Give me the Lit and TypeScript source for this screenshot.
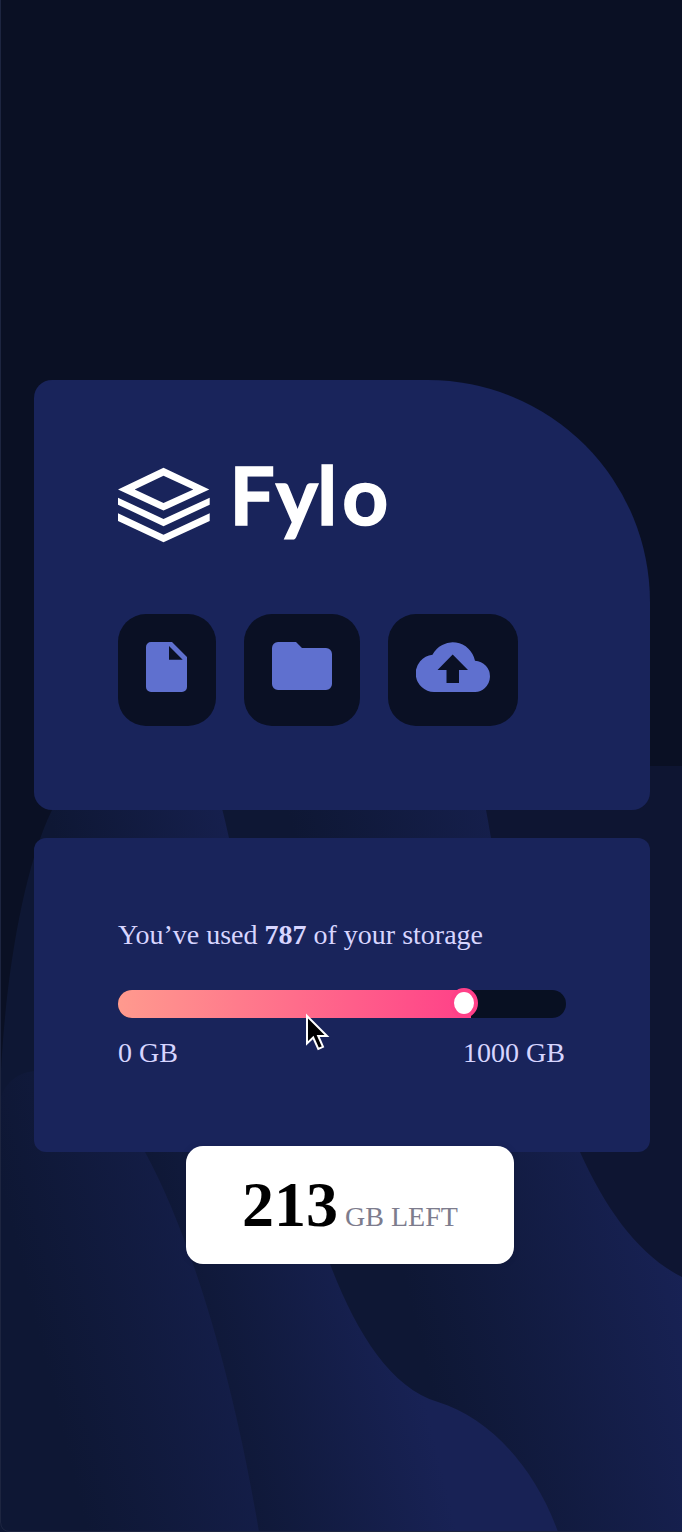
import { LitElement, html, css, svg } from "lit";
import { customElement, property } from "lit/decorators.js";

const fileIcon = html`<svg width="42" height="50" viewBox="0 0 42 50">
  <path fill="#5f70cf" fill-rule="evenodd" d="M5 0H26L41 15V45a5 5 0 0 1-5 5H5a5 5 0 0 1-5-5V5a5 5 0 0 1 5-5ZM23 4V17.700H36.700Z"/>
</svg>`;

const folderIcon = html`<svg width="60" height="48" viewBox="0 0 60 48">
  <path fill="#5f70cf" d="M6 0H24L30 6H54a6 6 0 0 1 6 6V42a6 6 0 0 1-6 6H6a6 6 0 0 1-6-6V6A6 6 0 0 1 6 0Z"/>
</svg>`;

const uploadIcon = html`<svg width="74" height="50" viewBox="0 0 74 50">
  <path fill="#5f70cf" fill-rule="evenodd" d="M18.700 50A18.700 18.700 0 0 1 16.500 12.700A22.700 22.700 0 0 1 59 18.800A15.600 15.600 0 0 1 57.700 50ZM36.700 12.500L21.500 28H30.500V41H43V28H52Z"/>
</svg>`;

@customElement("fylo-logo")
export class FyloLogo extends LitElement {
  static styles = css`
    :host { display: block; height: 80px; }
    svg { display: block; overflow: visible; }
    .word {
      font-family: Lato, sans-serif; font-weight: 700; font-size: 80px;
      stroke: #fff; stroke-width: 1.5px;
    }
  `;
  render() {
    return html`<svg width="272" height="80" viewBox="0 0 272 80" fill="#fff">
      <path fill-rule="evenodd" d="M45.500 3.700L91.300 25.400L45.500 46.600L0 25.400ZM45.500 11.700L16.700 25.500L45.500 39L75.300 25.500Z"/>
      <path d="M0 33.700L45.500 55L91.700 33.700V40.700L45.500 62.200L0 40.700Z"/>
      <path d="M0 49.300L45.500 70.700L91.700 49.300V57L45.500 78.200L0 57Z"/>
      <text class="word" x="111.500 157.800 199.300 224.200" y="61">Fylo</text>
    </svg>`;
  }
}

@customElement("storage-meter")
export class StorageMeter extends LitElement {
  @property({ type: Number }) used = 787;
  @property({ type: Number }) total = 1000;

  static styles = css`
    :host { display: block; color: #d7d5ff; font-size: 28px; line-height: 32px; }
    p { margin: 0 0 39px; }
    .track { display: flex; height: 28px; border-radius: 14px; background: #081022; }
    .fill {
      display: flex; align-items: center; justify-content: flex-end; position: relative;
      border-radius: 14px 0 0 14px;
      background: linear-gradient(90deg, #ff9a8e, #ff4088);
    }
    .knob {
      box-sizing: border-box; width: 28px; height: 30px; flex: none;
      position: relative; left: 7px; top: -1px;
      border: 4px solid #ff4088; border-radius: 50%; background: #fff;
    }
    .scale { display: flex; justify-content: space-between; margin-top: 19px; padding-right: 1px; }
  `;
  render() {
    const pct = (this.used / this.total) * 100;
    return html`
      <p>You’ve used <b>${this.used}</b> of your storage</p>
      <div class="track"><div class="fill" style="width:${pct}%"><span class="knob"></span></div></div>
      <div class="scale"><span>0 GB</span><span>${this.total} GB</span></div>
    `;
  }
}

const wave = (id: string, x1: number, y1: number, x2: number, y2: number) => svg`
  <linearGradient id=${id} gradientUnits="userSpaceOnUse" x1=${x1} y1=${y1} x2=${x2} y2=${y2}>
    <stop offset="0" stop-color="#0e1734"/><stop offset="1" stop-color="#182255"/>
  </linearGradient>`;

@customElement("app-root")
export class AppRoot extends LitElement {
  static styles = css`
    :host {
      display: block; position: relative; box-sizing: border-box;
      height: 1532px; overflow: hidden; background: #0a1024;
      font-family: "Liberation Serif", "Times New Roman", serif;
    }
    .backdrop { position: absolute; inset: 0; }
    main {
      position: relative; display: flex; flex-direction: column; gap: 28px;
      padding: 380px 32px 0 34px;
    }
    .card { box-sizing: border-box; background: #19245b; padding: 84px; }
    .files { height: 430px; border-radius: 18px 222px 18px 18px; }
    .actions { display: flex; gap: 28px; margin-top: 70px; }
    .tile {
      box-sizing: border-box; height: 112px; padding: 28px; border: 0;
      border-radius: 28px; background: #0a1024; display: flex; align-items: flex-start;
    }
    .tile svg { display: block; }
    .storage { position: relative; height: 314px; border-radius: 12px; padding-top: 81px; }
    .left {
      position: absolute; left: 152px; top: 308px; box-sizing: border-box;
      width: 328px; height: 118px; border-radius: 17px; background: #fff;
      display: flex; align-items: baseline; justify-content: center; gap: 7px;
      padding-top: 23px; color: #7d7c8d; font-size: 28px;
      box-shadow: 0 0 6px rgba(5, 10, 35, 0.150);
    }
    .left b { color: #000; font-size: 64px; line-height: 72px; }
    .pointer { position: absolute; left: 304px; top: 1012px; }
  `;

  render() {
    return html`
      <svg class="backdrop" width="682" height="1532" viewBox="0 0 682 1532">
        <defs>
          ${wave("far", 290, 820, 560, 753)}
          ${wave("mid", 50, 820, 268, 766)}
          ${wave("near", -90, 820, 200, 748)}
        </defs>
        <path fill="#0e1532" d="M240 766H682V1532H240Z"/>
        <path fill="url(#far)" d="M200 780H478C484 795 487 815 491 838C500 865 504 900 510 940C530 1030 550 1090 580 1152C607 1212 640 1256 682 1277V1532H200Z"/>
        <path fill="url(#mid)" d="M0 1100C2 1010 18 880 52 810L66 780H213C219 795 224 815 229 838C245 890 254 950 267 1020C285 1110 303 1200 330 1264C355 1330 390 1388 438 1402C490 1418 535 1468 558 1532H0Z"/>
        <path fill="url(#near)" d="M0 1100C15 1045 105 1070 145 1152C190 1235 232 1370 259 1532H0Z"/>
        <path fill="none" stroke="#1d2540" d="M.5 0V1522Q1 1531.500 10 1531.500H682"/>
      </svg>
      <main>
        <section class="card files">
          <fylo-logo></fylo-logo>
          <div class="actions">
            <button class="tile" aria-label="Documents">${fileIcon}</button>
            <button class="tile" aria-label="Folders">${folderIcon}</button>
            <button class="tile" aria-label="Upload">${uploadIcon}</button>
          </div>
        </section>
        <section class="card storage">
          <storage-meter></storage-meter>
          <div class="left"><b>213</b><span>GB LEFT</span></div>
        </section>
      </main>
      <svg class="pointer" width="28" height="42" viewBox="0 0 28 42">
        <path fill="#000" stroke="#fff" stroke-width="2" d="M3 4V31.500L9.200 25.500L14.300 37L19 34.800L14.200 24H23Z"/>
      </svg>
    `;
  }
}
